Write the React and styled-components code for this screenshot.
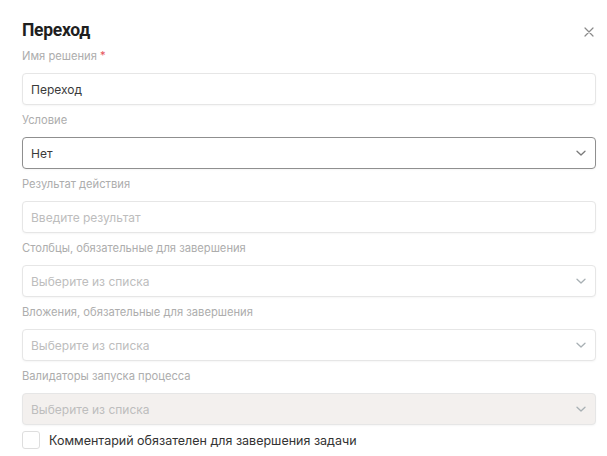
import React from "react";
import styled, { createGlobalStyle } from "styled-components";

const GlobalStyle = createGlobalStyle`
  html, body {
    margin: 0;
    padding: 0;
    background: #ffffff;
  }
  body {
    font-family: Inter, "Noto Sans", "Liberation Sans", sans-serif;
    color: #2b2b2b;
  }
`;

const Modal = styled.div`
  width: 607px;
  height: 456px;
  box-sizing: border-box;
  padding: 16px 11px 0 22px;
  display: flex;
  flex-direction: column;
  overflow: hidden;
`;

const Header = styled.div`
  display: flex;
  align-items: center;
  justify-content: space-between;
  height: 28px;
  margin-bottom: 4px;
`;

const Title = styled.h2`
  margin: 0;
  font-family: Roboto, Inter, "Liberation Sans", sans-serif;
  font-size: 17.5px;
  font-weight: 700;
  color: #1f1f1f;
  letter-spacing: -0.3px;
`;

const CloseButton = styled.button`
  border: none;
  background: transparent;
  padding: 0;
  margin-right: 0;
  margin-top: 4px;
  width: 14px;
  height: 14px;
  display: flex;
  align-items: center;
  justify-content: center;
  color: #8a8a8a;
  cursor: pointer;
`;

const Field = styled.div`
  display: flex;
  flex-direction: column;
  margin-bottom: 7px;
`;

const Label = styled.label`
  font-size: 11.2px;
  line-height: 16px;
  color: #adadad;
  margin-bottom: 9px;
`;

const Required = styled.span`
  color: #e5535b;
`;

const Control = styled.div`
  height: 32px;
  box-sizing: border-box;
  border: 1px solid ${(p) => (p.$focused ? "#8f8f8f" : "#e6e6e6")};
  border-radius: 4px;
  background: ${(p) => (p.$disabled ? "#f3f0ee" : "#ffffff")};
  box-shadow: 0 1px 2px rgba(0, 0, 0, 0.04);
  display: flex;
  align-items: center;
  justify-content: space-between;
  padding: 0 8px 0 8px;
`;

const Value = styled.span`
  font-size: 12px;
  color: ${(p) => (p.$placeholder ? "#bdbdbd" : "#3a3a3a")};
`;

const Chevron = styled.svg`
  width: 12px;
  height: 12px;
  color: ${(p) => (p.$dark ? "#7a7a7a" : "#a8b0b4")};
  flex-shrink: 0;
`;

const CheckRow = styled.label`
  display: flex;
  align-items: center;
  gap: 9px;
  margin-top: -1px;
`;

const Box = styled.span`
  width: 18px;
  height: 18px;
  box-sizing: border-box;
  border: 1px solid #dedede;
  border-radius: 3px;
  background: #fff;
`;

const CheckText = styled.span`
  font-size: 12.5px;
  color: #333;
`;

function ChevronIcon({ dark }) {
  return (
    <Chevron $dark={dark} viewBox="0 0 12 12" fill="none">
      <path d="M2 4.2 L6 8 L10 4.2" stroke="currentColor" strokeWidth="1.3" strokeLinecap="round" strokeLinejoin="round" />
    </Chevron>
  );
}

const fields = [
  { label: "Имя решения", required: true, value: "Переход" },
  { label: "Условие", value: "Нет", select: true, focused: true },
  { label: "Результат действия", placeholder: "Введите результат" },
  { label: "Столбцы, обязательные для завершения", placeholder: "Выберите из списка", select: true },
  { label: "Вложения, обязательные для завершения", placeholder: "Выберите из списка", select: true },
  { label: "Валидаторы запуска процесса", placeholder: "Выберите из списка", select: true, disabled: true },
];

export default function App() {
  return (
    <>
      <GlobalStyle />
      <Modal>
        <Header>
          <Title>Переход</Title>
          <CloseButton aria-label="Закрыть">
            <svg width="10" height="10" viewBox="0 0 10 10">
              <path d="M1 1 L9 9 M9 1 L1 9" stroke="currentColor" strokeWidth="1.2" strokeLinecap="round" />
            </svg>
          </CloseButton>
        </Header>
        {fields.map((f) => (
          <Field key={f.label}>
            <Label>
              {f.label}
              {f.required && <Required> *</Required>}
            </Label>
            <Control $focused={f.focused} $disabled={f.disabled}>
              <Value $placeholder={!f.value}>{f.value || f.placeholder}</Value>
              {f.select && <ChevronIcon dark={f.focused} />}
            </Control>
          </Field>
        ))}
        <CheckRow>
          <Box />
          <CheckText>Комментарий обязателен для завершения задачи</CheckText>
        </CheckRow>
      </Modal>
    </>
  );
}
